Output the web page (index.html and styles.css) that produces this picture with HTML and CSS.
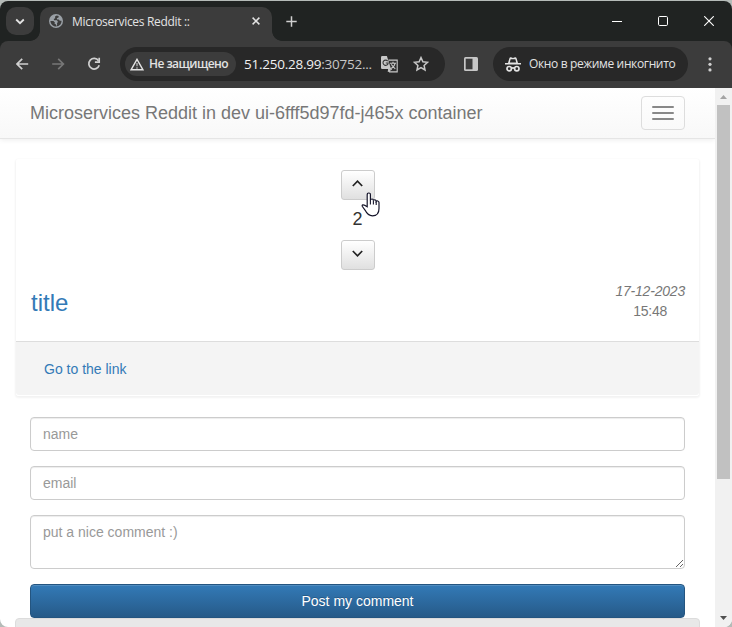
FILE: index.html
```html
<!DOCTYPE html>
<html lang="ru">
<head>
<meta charset="utf-8">
<title>Microservices Reddit ::</title>
<link rel="stylesheet" href="styles.css">
</head>
<body>
<div class="window">
  <header class="tabstrip">
    <button class="tab-search" aria-label="Tabs"><svg width="10" height="7" viewBox="0 0 10 7"><path d="M1.2 1.5 5 5.2 8.8 1.5" fill="none" stroke="#e3e3e3" stroke-width="1.8"/></svg></button>
    <div class="tab">
      <svg class="globe" width="14" height="14" viewBox="0 0 14 14"><circle cx="7" cy="7" r="7" fill="#9aa0a6"/><path d="M7.8 1.4 6 2.6 6.2 4.2 4.7 5 5.2 6.3H7.9L9 7.9 8 9.1 8.2 10.4 7 12.6C10.7 12.4 12.7 9.6 12.5 6.8L10.8 6.7 9.7 5.4H8.2L7.8 4.3 9.5 3.6 9.7 2.1ZM1.4 7 4.5 7.1 6 8.8 5.4 9.6 7 10.4V12.6C3.8 12.4 1.5 10 1.4 7Z" fill="#3c3c3c"/></svg>
      <span class="tab-title">Microservices Reddit ::</span>
      <svg class="tab-close" width="8" height="8" viewBox="0 0 8 8"><path d="M.6.6 7.4 7.4M7.4.6.6 7.4" stroke="#e3e3e3" stroke-width="1.5"/></svg>
    </div>
    <svg class="new-tab" width="11" height="11" viewBox="0 0 11 11"><path d="M5.5.3V10.7M.3 5.5H10.7" stroke="#d0d0d0" stroke-width="1.5"/></svg>
    <div class="controls">
      <svg width="10" height="10" viewBox="0 0 10 10"><path d="M0 5.5H10" stroke="#fff"/></svg>
      <svg width="10" height="10" viewBox="0 0 10 10"><rect x=".5" y=".5" width="9" height="9" rx="1.2" fill="none" stroke="#fff"/></svg>
      <svg width="10" height="10" viewBox="0 0 10 10"><path d="M.2.2 9.8 9.8M9.8.2.2 9.8" stroke="#fff" stroke-width="1.1"/></svg>
    </div>
  </header>

  <nav class="toolbar">
    <svg class="back" width="13" height="12" viewBox="0 0 13 12"><path d="M12.2 6H1.2M6.2.8 1 6 6.2 11.2" fill="none" stroke="#d0d0d0" stroke-width="1.7"/></svg>
    <svg class="forward" width="13" height="12" viewBox="0 0 13 12"><path d="M.2 6H11.2M6.2.8 11.4 6 6.2 11.2" fill="none" stroke="#777" stroke-width="1.7"/></svg>
    <svg class="reload" width="14" height="14" viewBox="0 0 14 14"><path d="M11.5 3.7A5.3 5.3 0 1 0 12.2 8.3" fill="none" stroke="#d0d0d0" stroke-width="1.7"/><path d="M12.2.8V5.2H7.9" fill="none" stroke="#d0d0d0" stroke-width="1.7"/></svg>
    <div class="omnibox">
      <div class="chip">
        <svg width="14" height="13" viewBox="0 0 14 13"><path d="M7 1.3 13 11.8H1Z" fill="none" stroke="#e3e3e3" stroke-width="1.4"/><path d="M7 5V8.3M7 9.2V10.7" stroke="#b5b5b5" stroke-width="1.3"/></svg>
        <span class="chip-label">Не защищено</span>
      </div>
      <span class="url"><b>51.250.28.99</b>:30752...</span>
      <svg class="translate" width="17" height="17" viewBox="0 0 17 17"><path d="M7.5 4.1H16.2V15.9H8.5L7.2 12" fill="#303030" stroke="#c7c7c7" stroke-width="1.1"/><path d="M0 1.2Q0 0 1.2 0H5.9L10 13H1.2Q0 13 0 11.8Z" fill="#c7c7c7"/><path d="M6.7 5.2A2.6 2.6 0 1 0 7.2 7H4.8" fill="none" stroke="#383838" stroke-width="1.1"/><path d="M9 7.2H15M12 5.8V7.2M14 7.3C13.6 10 11.5 11.7 9.4 12.7M10.2 8.3 14.3 13M8.5 13 7 15.6 10.7 13" fill="none" stroke="#c7c7c7" stroke-width="1.1"/></svg>
      <svg class="star" width="16" height="16" viewBox="0 0 16 16"><path d="M8 1.6 9.9 5.8 14.5 6.3 11.1 9.4 12 14 8 11.6 4 14 4.9 9.4 1.5 6.3 6.1 5.8Z" fill="none" stroke="#c7c7c7" stroke-width="1.5"/></svg>
    </div>
    <svg class="panel" width="14" height="14" viewBox="0 0 14 14"><rect width="14" height="14" rx="1.5" fill="#c7c7c7"/><rect x="1.7" y="1.7" width="6.8" height="10.6" fill="#3c3c3c"/></svg>
    <div class="incognito">
      <svg width="16" height="15" viewBox="0 0 16 15"><path d="M3 6 4.4 1.2Q4.8 0 6 .3L8 .9 10 .3Q11.2 0 11.6 1.2L13 6H16V7.4H0V6Z" fill="#e3e3e3"/><path d="M5.6 2.2H10.4L11.2 5.6H4.8Z" fill="#282828"/><g fill="none" stroke="#e3e3e3" stroke-width="1.7"><circle cx="4.2" cy="11.7" r="2.2"/><circle cx="11.8" cy="11.7" r="2.2"/><path d="M6.3 11.3Q8 10.4 9.7 11.3"/></g></svg>
      <span>Окно в режиме инкогнито</span>
    </div>
    <svg class="dots" width="4" height="15" viewBox="0 0 4 15"><g fill="#d0d0d0"><circle cx="2" cy="1.8" r="1.6"/><circle cx="2" cy="7.3" r="1.6"/><circle cx="2" cy="12.9" r="1.6"/></g></svg>
  </nav>

  <div class="viewport">
    <main class="page">
      <div class="navbar">
        <a class="brand">Microservices Reddit in dev ui-6fff5d97fd-j465x container</a>
        <button class="toggle" aria-label="Menu"><i></i><i></i><i></i></button>
      </div>
      <article class="post">
        <div class="votes">
          <button class="vote" aria-label="Up"><svg width="12" height="7" viewBox="0 0 12 7"><path d="M.8 6 5.5 1.2 10.2 6" fill="none" stroke="#222" stroke-width="1.7"/></svg></button>
          <span class="score">2</span>
          <button class="vote" aria-label="Down"><svg width="12" height="7" viewBox="0 0 12 7"><path d="M.8 1 5.5 5.8 10.2 1" fill="none" stroke="#222" stroke-width="1.7"/></svg></button>
          <svg class="cursor" width="20" height="26" viewBox="0 0 20 26"><path d="M6.2 14.7V2.7Q6.2 1 7.8 1T9.4 2.7V8.2Q9.6 7 11 7T12.4 8.6Q12.8 7.6 14 7.8T15.2 9.5Q15.7 8.8 16.8 9T18 10.6V16.5C18 21 15.6 23.8 11.5 23.8 7 23.8 5.4 20.8 4.2 18.3L1.4 14.5Q.7 13.2 1.9 12.9 3.2 12.6 6.2 14.7Z" fill="#fff" stroke="#15152a" stroke-width="1.2"/><path d="M9.4 8V12.5M12.4 8.5V12.5M15.2 9.5V13" stroke="#15152a" stroke-width="1.1"/></svg>
        </div>
        <div class="heading">
          <h3>title</h3>
          <div class="date"><em>17-12-2023</em><span>15:48</span></div>
        </div>
        <footer class="post-footer"><a>Go to the link</a></footer>
      </article>
      <form class="comment">
        <input placeholder="name">
        <input placeholder="email">
        <textarea placeholder="put a nice comment :)"></textarea>
        <button type="button">Post my comment</button>
      </form>
      <div class="well"></div>
    </main>
    <div class="scrollbar">
      <svg width="7" height="4" viewBox="0 0 7 4"><path d="M0 4 3.5 0 7 4Z" fill="#a3a3a3"/></svg>
      <div class="thumb"></div>
      <svg class="down" width="7" height="4" viewBox="0 0 7 4"><path d="M0 0 3.5 4 7 0Z" fill="#505050"/></svg>
    </div>
  </div>
</div>
</body>
</html>
```
FILE: styles.css
```css
* { box-sizing: border-box; }
body { margin: 0; background: #b5bbb8; overflow: hidden; }
svg { display: block; flex: none; }
button { padding: 0; font: inherit; }

.window {
  height: 627px;
  padding-top: 1px;
  display: flex;
  flex-direction: column;
  font-family: "Open Sans", "Noto Sans", sans-serif;
}

.tabstrip {
  height: 40px;
  flex: none;
  display: flex;
  align-items: center;
  background: #202322;
  border-radius: 8px 8px 0 0;
}
.tab-search {
  width: 28px;
  height: 28px;
  margin: 0 6px;
  border: 0;
  border-radius: 10px;
  background: #3c3c3c;
  display: grid;
  place-items: center;
}
.tab {
  position: relative;
  width: 232px;
  height: 34px;
  align-self: flex-end;
  display: flex;
  align-items: center;
  padding: 0 12px 6px 9px;
  border-radius: 10px 10px 0 0;
  background: #3c3c3c;
}
.tab::before, .tab::after {
  content: "";
  position: absolute;
  bottom: 0;
  width: 10px;
  height: 10px;
}
.tab::before { left: -10px; background: radial-gradient(circle at 0 0, transparent 9.5px, #3c3c3c 10.2px); }
.tab::after { right: -10px; background: radial-gradient(circle at 100% 0, transparent 9.5px, #3c3c3c 10.2px); }
.tab-title { margin-left: 9px; font-size: 12px; letter-spacing: -0.32px; color: #e3e3e3; }
.tab-close { margin-left: auto; }
.new-tab { margin-left: 14px; }
.controls { display: flex; gap: 36px; margin: 0 18px 0 auto; }

.toolbar {
  height: 47px;
  flex: none;
  display: flex;
  align-items: center;
  padding: 0 20px 1px 16px;
  border-radius: 8px 8px 0 0;
  background: #3c3c3c;
  box-shadow: 0 -8px 0 #202322;
  clip-path: inset(0);
}
.forward { margin-left: 23px; }
.reload { margin-left: 22px; }
.omnibox {
  width: 325px;
  height: 34px;
  margin-left: 19px;
  padding: 0 16px 0 5px;
  display: flex;
  align-items: center;
  border-radius: 17px;
  background: #282828;
}
.chip {
  width: 111px;
  height: 24px;
  padding-left: 5px;
  display: flex;
  align-items: center;
  border-radius: 12px;
  background: #3c3c3c;
}
.chip-label { margin-left: 5px; font-size: 12px; font-weight: 600; letter-spacing: -0.54px; color: #e3e3e3; white-space: nowrap; }
.url { width: 128px; margin-left: 8px; font-size: 13.5px; letter-spacing: -0.24px; color: #c7c7c7; white-space: nowrap; }
.url b { font-weight: 400; color: #f1f1f1; }
.translate { margin-left: 9px; }
.star { margin-left: auto; }
.panel { margin-left: 19px; }
.incognito {
  width: 195px;
  height: 34px;
  margin-left: 15px;
  padding-left: 12px;
  display: flex;
  align-items: center;
  border-radius: 17px;
  background: #282828;
  color: #e3e3e3;
  font-size: 12px;
  letter-spacing: -0.36px;
  white-space: nowrap;
}
.incognito span { margin-left: 8px; }
.chip-label, .url, .incognito span { padding-bottom: 1px; }
.dots { margin-left: auto; }

.viewport {
  flex: 1;
  min-height: 0;
  display: flex;
  background: #fff;
  border-radius: 0 0 8px 8px;
  overflow: hidden;
  font: 14px/20px "Liberation Sans", Arial, sans-serif;
}
.page { width: 715px; overflow: hidden; }
.navbar {
  height: 51px;
  display: flex;
  align-items: center;
  justify-content: space-between;
  padding: 0 30px;
  background: linear-gradient(#fff, #f8f8f8);
  border-bottom: 1px solid #e5e5e5;
  box-shadow: 0 1px 5px rgba(0, 0, 0, .075);
}
.brand { font-size: 18px; color: #777; }
.toggle {
  width: 44px;
  height: 34px;
  display: flex;
  flex-direction: column;
  align-items: center;
  justify-content: center;
  gap: 4px;
  border: 1px solid #ddd;
  border-radius: 4px;
  background: transparent;
}
.toggle i { width: 22px; height: 2px; border-radius: 1px; background: #888; }

.post {
  height: 239px;
  margin: 19px 15px 0;
  border: 1px solid transparent;
  border-radius: 4px;
  background: #fff;
  background-clip: padding-box;
  box-shadow: 0 1px 2px rgba(0, 0, 0, .05);
}
.votes {
  position: relative;
  padding: 11px 0 0;
  display: flex;
  flex-direction: column;
  align-items: center;
}
.vote {
  width: 34px;
  height: 30px;
  padding-bottom: 3px;
  display: grid;
  place-items: center;
  border: 1px solid #ccc;
  border-radius: 3px;
  background: linear-gradient(#fff, #e0e0e0);
}
.score { height: 40px; line-height: 38px; font-size: 18px; color: #333; }
.cursor { position: absolute; left: 345px; top: 33px; }
.heading {
  height: 71px;
  display: flex;
  justify-content: space-between;
  padding: 11px 14px 0 15px;
}
h3 { margin: 9px 0 0; font-size: 24px; line-height: 26px; font-weight: 400; color: #337ab7; }
.date { display: flex; flex-direction: column; align-items: center; letter-spacing: -0.2px; color: #777; }
.post-footer {
  height: 54px;
  padding: 17px 28px;
  border-top: 1px solid #ddd;
  border-radius: 0 0 3px 3px;
  background: #f4f4f4;
  color: #337ab7;
}
.comment { display: flex; flex-direction: column; gap: 15px; padding: 20px 30px 0; }
.comment input, .comment textarea {
  display: block;
  width: 100%;
  height: 34px;
  margin: 0;
  padding: 6px 12px;
  border: 1px solid #ccc;
  border-radius: 4px;
  box-shadow: inset 0 1px 1px rgba(0, 0, 0, .075);
  font: inherit;
  color: #555;
}
.comment textarea { height: 54px; overflow: hidden; }
.comment ::placeholder { color: #999; opacity: 1; }
.comment button {
  height: 34px;
  border: 1px solid #245580;
  border-radius: 4px;
  background: linear-gradient(#337ab7, #265a88);
  box-shadow: inset 0 1px 0 rgba(255, 255, 255, .15);
  color: #fff;
  text-shadow: 0 -1px 0 rgba(0, 0, 0, .2);
}
.well {
  height: 30px;
  margin: 0 15px;
  border: 1px solid #dcdcdc;
  border-radius: 4px;
  background: #e8e8e8;
}
.scrollbar {
  width: 17px;
  padding: 7px 0;
  display: flex;
  flex-direction: column;
  align-items: center;
  background: #f1f1f1;
}
.thumb { width: 13px; height: 374px; margin-top: 6px; background: #c1c1c1; }
.down { margin-top: auto; }
```
